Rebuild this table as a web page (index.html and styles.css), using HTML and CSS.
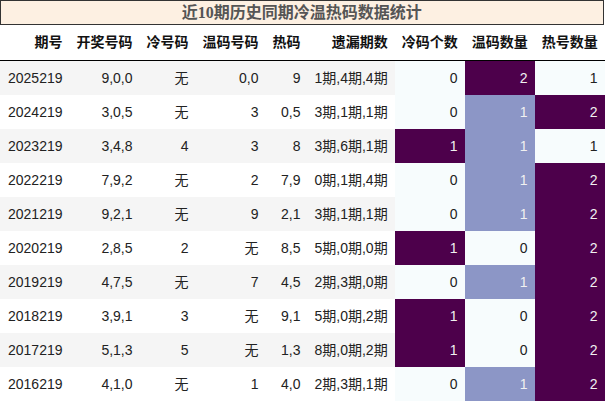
FILE: index.html
```html
<!DOCTYPE html>
<html>
<head>
<meta charset="utf-8">
<link rel="stylesheet" href="styles.css">
</head>
<body>
<div class="wrap">
  <div class="title">近10期历史同期冷温热码数据统计</div>
  <table class="stats">
    <thead>
      <tr><th>期号</th><th>开奖号码</th><th>冷号码</th><th>温码号码</th><th>热码</th><th>遗漏期数</th><th>冷码个数</th><th>温码数量</th><th>热号数量</th></tr>
    </thead>
    <tbody>
      <tr><td>2025219</td><td>9,0,0</td><td>无</td><td>0,0</td><td>9</td><td>1期,4期,4期</td><td class="h0">0</td><td class="h2">2</td><td class="h0">1</td></tr>
      <tr><td>2024219</td><td>3,0,5</td><td>无</td><td>3</td><td>0,5</td><td>3期,1期,1期</td><td class="h0">0</td><td class="h1">1</td><td class="h2">2</td></tr>
      <tr><td>2023219</td><td>3,4,8</td><td>4</td><td>3</td><td>8</td><td>3期,6期,1期</td><td class="h2">1</td><td class="h1">1</td><td class="h0">1</td></tr>
      <tr><td>2022219</td><td>7,9,2</td><td>无</td><td>2</td><td>7,9</td><td>0期,1期,4期</td><td class="h0">0</td><td class="h1">1</td><td class="h2">2</td></tr>
      <tr><td>2021219</td><td>9,2,1</td><td>无</td><td>9</td><td>2,1</td><td>3期,1期,1期</td><td class="h0">0</td><td class="h1">1</td><td class="h2">2</td></tr>
      <tr><td>2020219</td><td>2,8,5</td><td>2</td><td>无</td><td>8,5</td><td>5期,0期,0期</td><td class="h2">1</td><td class="h0">0</td><td class="h2">2</td></tr>
      <tr><td>2019219</td><td>4,7,5</td><td>无</td><td>7</td><td>4,5</td><td>2期,3期,0期</td><td class="h0">0</td><td class="h1">1</td><td class="h2">2</td></tr>
      <tr><td>2018219</td><td>3,9,1</td><td>3</td><td>无</td><td>9,1</td><td>5期,0期,2期</td><td class="h2">1</td><td class="h0">0</td><td class="h2">2</td></tr>
      <tr><td>2017219</td><td>5,1,3</td><td>5</td><td>无</td><td>1,3</td><td>8期,0期,2期</td><td class="h2">1</td><td class="h0">0</td><td class="h2">2</td></tr>
      <tr><td>2016219</td><td>4,1,0</td><td>无</td><td>1</td><td>4,0</td><td>2期,3期,1期</td><td class="h0">0</td><td class="h1">1</td><td class="h2">2</td></tr>
    </tbody>
  </table>
</div>
</body>
</html>
```

FILE: styles.css
```css
html, body {
  margin: 0;
  padding: 0;
  background: #ffffff;
}

.wrap {
  display: inline-block;
}

.title {
  height: 23px;
  line-height: 23px;
  margin-right: 1px;
  border: 1px solid #333333;
  background: #fdf0e2;
  color: #555555;
  font-family: "Liberation Serif", "Noto Sans CJK SC", serif;
  font-weight: bold;
  font-size: 16px;
  text-align: center;
}

.stats {
  border-collapse: collapse;
  border-spacing: 0;
  font-family: "Liberation Sans", "Noto Sans CJK SC", sans-serif;
  font-size: 14px;
  color: #222222;
}

.stats th,
.stats td {
  text-align: right;
  padding: 7px 7px;
  line-height: 20px;
  white-space: nowrap;
}

.stats th:first-child,
.stats td:first-child {
  padding-left: 8px;
}

.stats th {
  font-weight: bold;
  color: #111111;
  padding-top: 7px;
  padding-bottom: 8px;
  border-bottom: 1px solid #000000;
}

.stats tbody tr:nth-child(odd) {
  background: #f5f5f5;
}

.stats tbody tr:nth-child(even) {
  background: #ffffff;
}

.stats td.h0 {
  background: #f7fcfd;
  color: #222222;
}

.stats td.h1 {
  background: #8c96c6;
  color: #f1f1f1;
}

.stats td.h2 {
  background: #4d004b;
  color: #f1f1f1;
}
```
